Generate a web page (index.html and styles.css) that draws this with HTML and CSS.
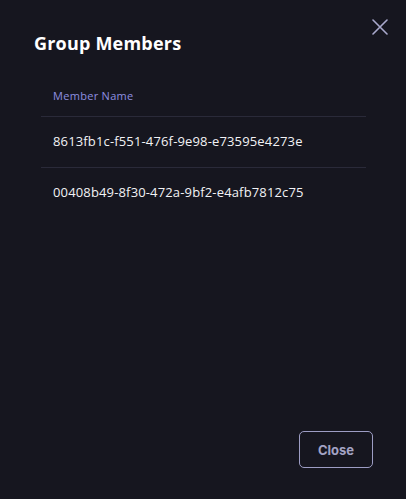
FILE: index.html
```html
<!DOCTYPE html>
<html>
<head>
<meta charset="utf-8">
<link rel="stylesheet" href="styles.css">
</head>
<body>
<div class="modal">
  <button class="close-x" aria-label="Close">
    <svg width="16" height="16" viewBox="0 0 16 16"><path d="M1 1 L15 15 M15 1 L1 15" stroke="currentColor" stroke-width="1.6" fill="none" stroke-linecap="round"/></svg>
  </button>
  <h2 class="title">Group Members</h2>
  <div class="table">
    <div class="th">Member Name</div>
    <div class="row">8613fb1c-f551-476f-9e98-e73595e4273e</div>
    <div class="row">00408b49-8f30-472a-9bf2-e4afb7812c75</div>
  </div>
  <div class="footer">
    <button class="btn">Close</button>
  </div>
</div>
</body>
</html>
```
FILE: styles.css
```css
html, body {
  margin: 0;
  height: 100%;
  background: #16161f;
}
.modal {
  position: relative;
  box-sizing: border-box;
  height: 499px;
  padding: 30px 33px 31px 34px;
  display: flex;
  flex-direction: column;
  font-family: "Open Sans", sans-serif;
  color: #ffffff;
}
.close-x {
  position: absolute;
  top: 19px;
  right: 18px;
  background: none;
  border: none;
  padding: 0;
  color: #a9a9cc;
  display: flex;
}
.title {
  margin: 0;
  font-size: 18px;
  font-weight: 700;
  line-height: 26px;
  letter-spacing: 0.2px;
}
.table {
  margin: 32px 7px 0 7px;
}
.th {
  padding: 0 12px 12px;
  font-size: 11px;
  line-height: 16px;
  color: #8e8fe0;
  letter-spacing: 0.3px;
  border-bottom: 1px solid #2a2a39;
}
.row {
  padding: 15px 12px 17px;
  font-size: 13px;
  font-weight: 500;
  line-height: 18px;
  color: #f2f2f5;
  letter-spacing: 0.15px;
  border-bottom: 1px solid #2a2a39;
}
.row:last-child {
  border-bottom: none;
}
.footer {
  margin-top: auto;
  display: flex;
  justify-content: flex-end;
}
.btn {
  width: 74px;
  height: 37px;
  box-sizing: border-box;
  background: transparent;
  border: 1px solid #9d9dc4;
  border-radius: 5px;
  color: #a3a3c4;
  font-family: Inter, sans-serif;
  font-weight: 700;
  font-size: 13px;
}
```
